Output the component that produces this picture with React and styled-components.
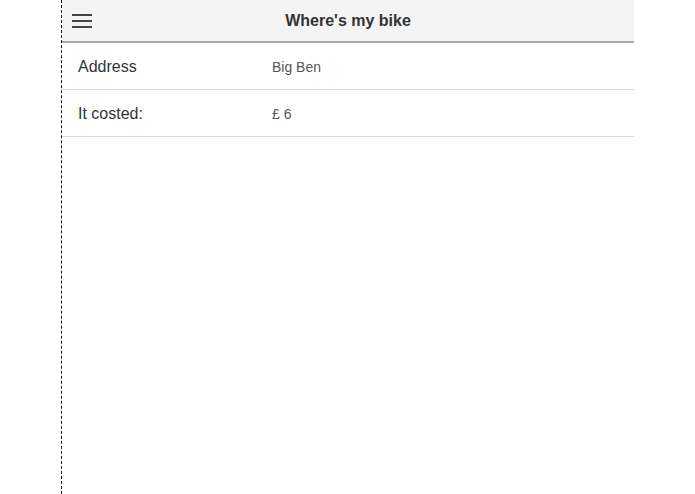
import styled, { createGlobalStyle } from 'styled-components';

const GlobalStyle = createGlobalStyle`
	html, body {
		margin: 0;
		padding: 0;
		background: #fff;
		font-family: "Liberation Sans", Arial, sans-serif;
	}
`;

const Page = styled.div`
	display: flex;
	height: 494px;
	padding-left: 61px;
`;

const Panel = styled.div`
	width: 572px;
	border-left: 1px dashed #111;
	display: flex;
	flex-direction: column;
`;

const Header = styled.header`
	height: 41px;
	background: #f4f4f4;
	border-bottom: 2px solid #a9a9a9;
	display: flex;
	align-items: center;
	position: relative;
`;

const MenuButton = styled.button`
	width: 20px;
	height: 14px;
	margin: 0 0 0 10px;
	padding: 0;
	border: none;
	background: none;
	display: flex;
	flex-direction: column;
	justify-content: space-between;
	cursor: pointer;

	& span {
		display: block;
		height: 2px;
		background: #444;
	}
`;

const Title = styled.h1`
	position: absolute;
	left: 0;
	right: 0;
	margin: 0;
	text-align: center;
	font-size: 16px;
	font-weight: bold;
	color: #333;
	pointer-events: none;
`;

const Row = styled.div`
	height: 46px;
	border-bottom: 1px solid #d9d9d9;
	display: flex;
	align-items: center;
	padding: 1px 0 0 16px;
	box-sizing: border-box;
	height: 47px;
`;

const Label = styled.div`
	width: 194px;
	font-size: 16px;
	color: #333;
`;

const Value = styled.div`
	font-size: 14px;
	color: #555;
`;

const rows = [
	{ label: 'Address', value: 'Big Ben' },
	{ label: 'It costed:', value: '£ 6' },
];

export default function App() {
	return (
		<>
			<GlobalStyle />
			<Page>
				<Panel>
					<Header>
						<MenuButton aria-label="Menu">
							<span />
							<span />
							<span />
						</MenuButton>
						<Title>Where's my bike</Title>
					</Header>
					{rows.map((row) => (
						<Row key={row.label}>
							<Label>{row.label}</Label>
							<Value>{row.value}</Value>
						</Row>
					))}
				</Panel>
			</Page>
		</>
	);
}
